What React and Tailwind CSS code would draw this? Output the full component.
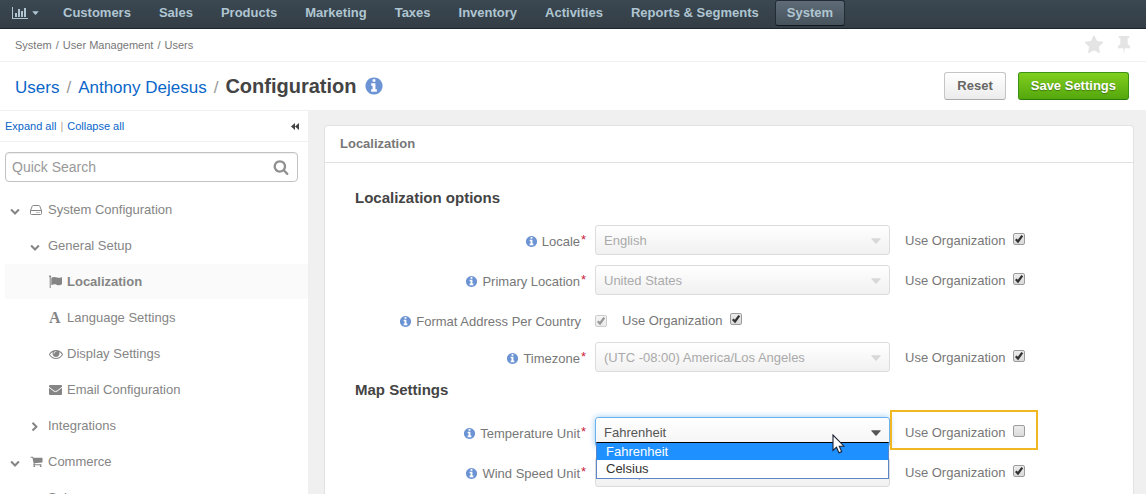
import React, { useId } from "react";

const ICONS = {
  info: [1792, "M1152 1376v-160q0-14-9-23t-23-9h-96v-512q0-14-9-23t-23-9h-320q-14 0-23 9t-9 23v160q0 14 9 23t23 9h96v320h-96q-14 0-23 9t-9 23v160q0 14 9 23t23 9h448q14 0 23-9t9-23zm-128-896v-160q0-14-9-23t-23-9h-192q-14 0-23 9t-9 23v160q0 14 9 23t23 9h192q14 0 23-9t9-23zm640 416q0 209-103 385.5t-279.5 279.5-385.5 103-385.5-103-279.5-279.5-103-385.5 103-385.5 279.5-279.5 385.5-103 385.5 103 279.5 279.5 103 385.5z"],
  search: [1792, "M1216 832q0-185-131.5-316.5t-316.5-131.5-316.5 131.5-131.5 316.5 131.5 316.5 316.5 131.5 316.5-131.5 131.5-316.5zm512 832q0 52-38 90t-90 38q-54 0-90-38l-343-342q-179 124-399 124-143 0-273.5-55.5t-225-150-150-225-55.5-273.5 55.5-273.5 150-225 225-150 273.5-55.5 273.5 55.5 225 150 150 225 55.5 273.5q0 220-124 399l343 343q37 37 37 90z"],
  chart: [2048, "M640 896v512h-256v-512h256zm384-512v1024h-256v-1024h256zm1024 1152v128h-2048v-1536h128v1408h1920zm-640-896v768h-256v-768h256zm384-384v1152h-256v-1152h256z"],
  down: [1792, "M1683 808l-742 741q-19 19-45 19t-45-19l-742-741q-19-19-19-45.5t19-45.5l166-165q19-19 45-19t45 19l531 531 531-531q19-19 45-19t45 19l166 165q19 19 19 45.5t-19 45.5z"],
  right: [1792, "M1363 877l-742 742q-19 19-45 19t-45-19l-166-166q-19-19-19-45t19-45l531-531-531-531q-19-19-19-45t19-45l166-166q19-19 45-19t45 19l742 742q19 19 19 45t-19 45z"],
  star: [1792, "M1728 647q0 22-26 48l-363 354 86 500q1 7 1 20 0 21-10.5 35.5t-30.5 14.5q-19 0-40-12l-449-236-449 236q-22 12-40 12-21 0-31.5-14.5t-10.5-35.5q0-6 2-20l86-500-364-354q-25-27-25-48 0-37 56-46l502-73 225-455q19-41 49-41t49 41l225 455 502 73q56 9 56 46z"],
  eye: [1792, "M1664 960q-152-236-381-353 61 104 61 225 0 185-131.5 316.5t-316.5 131.5-316.5-131.5-131.5-316.5q0-121 61-225-229 117-381 353 133 205 333.5 326.5t434.5 121.5 434.5-121.5 333.5-326.5zm-720-384q0-20-14-34t-34-14q-125 0-214.5 89.5t-89.5 214.5q0 20 14 34t34 14 34-14 14-34q0-86 61-147t147-61q20 0 34-14t14-34zm848 384q0 34-20 69-140 230-376.5 368.5t-499.5 138.5-499.5-139-376.5-368q-20-35-20-69t20-69q140-229 376.5-368t499.5-139 499.5 139 376.5 368q20 35 20 69z"],
  cart: [1792, "M704 1536q0 52-38 90t-90 38-90-38-38-90 38-90 90-38 90 38 38 90zm896 0q0 52-38 90t-90 38-90-38-38-90 38-90 90-38 90 38 38 90zm128-1088v512q0 24-16.5 42.5t-40.5 21.5l-1044 122q13 60 13 70 0 16-24 64h920q26 0 45 19t19 45-19 45-45 19h-1024q-26 0-45-19t-19-45q0-11 8-31.5t16-36 21.5-40 15.5-29.5l-177-823h-204q-26 0-45-19t-19-45 19-45 45-19h256q16 0 28.5 6.5t19.5 15.5 13 24.5 8 26 5.5 29.5 4.5 26h1201q26 0 45 19t19 45z"],
};

function Icon({ name, className }) {
  const [width, d] = ICONS[name];
  return (
    <svg viewBox={`0 0 ${width} 1792`} className={`shrink-0 ${className}`} fill="currentColor" aria-hidden="true">
      <path d={d} />
    </svg>
  );
}

function DriveIcon() {
  return (
    <svg viewBox="0 0 12 12" className="size-3 shrink-0" fill="none" stroke="currentColor" aria-hidden="true">
      <path d="M.5 6.5 2.2 2.2Q2.5 1.5 3.2 1.5h5.6q.7 0 1 .7l1.7 4.3v3q0 1-1 1h-9q-1 0-1-1zh11" />
      <path d="M6.5 8.5h1M8.5 8.5h1" />
    </svg>
  );
}

function FlagIcon() {
  return (
    <svg viewBox="0 0 14 14" className="size-3.5 shrink-0" fill="currentColor" aria-hidden="true">
      <path d="M0 1.500a1 1 0 1 1 1.700.7V13H.7V2.300A1 1 0 0 1 0 1.500zM2.300 2.800C4 1.700 6 1.600 8 2.400c1.700.8 3.300.5 5-.4V9.200c-2 1.200-3.700 1.300-5.500.5C6 9 4.300 9.200 2.300 10.200z" />
    </svg>
  );
}

function MailIcon() {
  return (
    <svg viewBox="0 0 14 14" className="size-3.5 shrink-0" aria-hidden="true">
      <rect x="0" y="2" width="13" height="10" rx="1" fill="currentColor" />
      <path d="M0 4.300 5 8.100q1.500 1 3 0L13 4.300" fill="none" stroke="#fff" />
    </svg>
  );
}

function PinIcon() {
  return (
    <svg viewBox="0 0 14 18" className="h-[18px] w-3.5 shrink-0" fill="currentColor" aria-hidden="true">
      <path d="M2.500 0h9q.8 0 .8.800v.8q0 .7-.8.7h-.8V8q2.600 1.200 2.600 4.200H7.800L7 18l-.8-5.800H.7Q.7 9.200 3.300 8V2.300h-.8q-.8 0-.8-.7V.8q0-.8.8-.8z" />
    </svg>
  );
}

function Caret({ className }) {
  return (
    <svg viewBox="0 0 10 6" className={className} fill="currentColor" aria-hidden="true">
      <path d="M.6.200h8.800q.6.100.2.700L5.600 5.500q-.6.500-1.200 0L.4.900Q0 .3.600.200z" />
    </svg>
  );
}

const NAV = ["Customers", "Sales", "Products", "Marketing", "Taxes", "Inventory", "Activities", "Reports & Segments"];

function TopNav() {
  return (
    <nav className="flex h-[29px] shrink-0 items-start border-b border-[#1c242d] bg-linear-to-b from-[#3b4851] to-[#333d46] text-[13px] font-bold text-[#afc6d2]">
      <button type="button" aria-label="Dashboards" className="flex h-[25px] w-[46px] items-center gap-1 pl-3">
        <Icon name="chart" className="h-3.5 w-4" />
        <Caret className="h-1 w-[7px]" />
      </button>
      <ul className="flex h-[26px] gap-1 pl-[5px] whitespace-nowrap">
        {NAV.map((item) => (
          <li key={item} className="flex">
            <a href="#" className="px-3 leading-[26px]">{item}</a>
          </li>
        ))}
        <li className="flex">
          <a href="#" className="rounded-[3px] border border-[#232c35] border-b-[#10161c] bg-linear-to-b from-[#5f6b76] to-[#46525c] px-[11px] leading-6">
            System
          </a>
        </li>
      </ul>
    </nav>
  );
}

function Breadcrumbs() {
  return (
    <div className="flex h-[33px] shrink-0 items-center justify-between border-b border-[#f0f0f0] pr-[15px] pl-[15px]">
      <p className="text-[11px] text-[#777]">
        System <span className="mx-px">/</span> User Management <span className="mx-px">/</span> Users
      </p>
      <div className="flex items-center gap-[13px] text-[#e4e4e4]">
        <button type="button" aria-label="Add to favorites"><Icon name="star" className="size-5" /></button>
        <button type="button" aria-label="Pin page"><PinIcon /></button>
      </div>
    </div>
  );
}

function TitleBar() {
  return (
    <header className="flex h-12 shrink-0 items-center justify-between pr-[17px] pl-[15px]">
      <h1 className="flex items-baseline gap-[7px] text-[17px] text-[#999]">
        <a href="#" className="text-[#0a66c9]">Users</a>
        <span>/</span>
        <a href="#" className="text-[#0a66c9]">Anthony Dejesus</a>
        <span>/</span>
        <span className="text-xl font-bold text-[#444]">Configuration</span>
        <Icon name="info" className="size-5 self-center text-[#6c93d3]" />
      </h1>
      <div className="flex gap-3 text-[13px] font-bold">
        <button type="button" className="h-7 rounded-[3px] border border-[#c5c5c5] border-b-[#aaa] bg-linear-to-b from-white to-[#ececec] px-3 text-[#666]">
          Reset
        </button>
        <button type="button" className="h-7 rounded-[3px] border border-[#3c9313] border-b-[#2e7a0b] bg-linear-to-b from-[#80cf1f] to-[#54a70c] px-3 text-white text-shadow-[0_1px_1px_rgb(0_0_0/0.35)]">
          Save Settings
        </button>
      </div>
    </header>
  );
}

const TREE = [
  { label: "System Configuration", depth: 0, arrow: "down", icon: <DriveIcon /> },
  { label: "General Setup", depth: 1, arrow: "down" },
  { label: "Localization", depth: 2, icon: <FlagIcon />, active: true },
  { label: "Language Settings", depth: 2, icon: <span aria-hidden="true" className="w-3.5 font-['Liberation_Serif',serif] text-base font-bold">A</span> },
  { label: "Display Settings", depth: 2, icon: <Icon name="eye" className="size-3.5" /> },
  { label: "Email Configuration", depth: 2, icon: <MailIcon /> },
  { label: "Integrations", depth: 1, arrow: "right" },
  { label: "Commerce", depth: 0, arrow: "down", icon: <Icon name="cart" className="size-[13px]" /> },
  { label: "Sales", depth: 1, arrow: "right" },
];

const INDENT = ["pl-[5px]", "pl-[25px]", "pl-[43px]"];

function TreeRow({ label, depth, arrow, icon, active }) {
  return (
    <li>
      <a href="#" className={`flex h-[35px] items-center ${INDENT[depth]} ${active ? "bg-[#fafafa] font-bold" : ""}`}>
        {arrow && (
          <span className="flex w-[18px] pt-[2px]">
            <Icon name={arrow} className="size-[10px]" />
          </span>
        )}
        {icon && <span className={`flex w-[18px] items-center ${depth === 0 ? "ml-[2px]" : "ml-px"}`}>{icon}</span>}
        {label}
      </a>
    </li>
  );
}

function Sidebar() {
  return (
    <aside className="w-[308px] shrink-0 border-t border-[#f0f0f0] bg-white">
      <div className="flex h-[31px] items-center justify-between border-b border-[#f0f0f0] pr-[9px] pl-[5px] text-[11px]">
        <p className="text-[#777]">
          <a href="#" className="text-[#0a66c9]">Expand all</a>
          <span className="mx-1 text-[#b5a48c]">|</span>
          <a href="#" className="text-[#0a66c9]">Collapse all</a>
        </p>
        <button type="button" aria-label="Collapse sidebar" className="text-[#444]">
          <svg viewBox="0 0 8 7" className="h-[7px] w-2" fill="currentColor" aria-hidden="true">
            <path d="M4 0v7L0 3.500zM8 0v7L4 3.500z" />
          </svg>
        </button>
      </div>
      <div className="pt-[10px] pr-[10px] pl-[5px]">
        <form className="flex h-[30px] items-center rounded-[4px] border border-[#c2c2c2] pr-[8px] pl-[6px] shadow-[inset_0_1px_1px_rgb(0_0_0/0.07)]">
          <input type="text" aria-label="Quick Search" placeholder="Quick Search" className="min-w-0 flex-1 bg-transparent text-sm text-[#555] outline-none placeholder:text-[#999]" />
          <button type="submit" aria-label="Search" className="text-[#8f8f8f]">
            <Icon name="search" className="size-4" />
          </button>
        </form>
      </div>
      <ul className="flex flex-col gap-px pt-[10px] pl-[5px] text-[13px] text-[#858585]">
        {TREE.map((row) => <TreeRow key={row.label} {...row} />)}
      </ul>
    </aside>
  );
}

function Checkbox({ id, label, checked, disabled }) {
  return (
    <span className={`relative flex size-3 ${disabled ? "opacity-50" : ""}`}>
      <input
        id={id}
        type="checkbox"
        aria-label={label}
        defaultChecked={checked}
        disabled={disabled}
        className="peer size-3 appearance-none rounded-[2px] border border-[#9c9c9c] bg-linear-to-b from-[#ececec] to-[#dadada]"
      />
      <svg viewBox="0 0 12 12" className="pointer-events-none absolute inset-0 hidden size-3 peer-checked:block" fill="none" stroke="#333" strokeWidth="2.300" aria-hidden="true">
        <path d="M2.800 6.300 5 8.500 9.300 2.600" />
      </svg>
    </span>
  );
}

function UseOrganization({ checked = true, highlighted }) {
  const id = useId();
  return (
    <div className="relative flex h-[30px] items-center gap-2 px-[15px] pt-[2px]">
      {highlighted && <span className="pointer-events-none absolute -top-[7px] right-[2px] left-0 h-10 border-2 border-[#f2b824]" />}
      <label htmlFor={id}>Use Organization</label>
      <span className="pb-1"><Checkbox id={id} checked={checked} /></span>
    </div>
  );
}

function FieldLabel({ htmlFor, required = true, children }) {
  return (
    <div className="flex w-60 shrink-0 items-center justify-end pt-[3px]">
      <Icon name="info" className="mr-[4px] size-[13px] text-[#6c93d3]" />
      <label htmlFor={htmlFor}>{children}</label>
      {required ? <span className="w-[15px] pb-1 pl-px text-[#c81f3c]">*</span> : <span className="w-3.5" />}
    </div>
  );
}

function OptionList() {
  return (
    <ul role="listbox" aria-label="Temperature Unit options" className="absolute top-[25px] right-px left-px z-10 border border-[#5c86c8] border-t-black bg-white text-[13px] leading-[17px] text-[#333]">
      <li role="option" aria-selected="true" className="bg-[#1e90ff] px-[9px] text-white">Fahrenheit</li>
      <li role="option" aria-selected="false" className="px-[9px] pb-px">Celsius</li>
    </ul>
  );
}

function Pointer() {
  return (
    <svg viewBox="0 0 13 20" className="pointer-events-none absolute top-[17px] right-[45px] z-20 h-5 w-[13px]" aria-hidden="true">
      <path d="M1 1v15.500l3.500-3.300 2.400 5.600 2.800-1.200-2.400-5.400H12z" fill="#fff" stroke="#1c2233" strokeWidth="1.100" />
    </svg>
  );
}

function SelectField({ label, value, options = [value], open, useOrg = true }) {
  const id = useId();
  return (
    <div className="mb-[10px] flex h-[30px]">
      <FieldLabel htmlFor={id}>{label}</FieldLabel>
      <div className="relative w-[295px] shrink-0">
        <select
          id={id}
          disabled={!open}
          defaultValue={value}
          className={`h-[30px] w-full appearance-none rounded-[3px] border bg-linear-to-b px-2 pt-[2px] opacity-100 outline-none ${
            open
              ? "border-[#6bb2ec] from-white to-[#f4f4f4] text-[#555] shadow-[0_0_6px_rgb(82_168_236/0.6)]"
              : "border-[#dcdcdc] from-white to-[#f1f1f1] text-[#aaa]"
          }`}
        >
          {options.map((option) => <option key={option}>{option}</option>)}
        </select>
        <Caret className={`pointer-events-none absolute top-[13px] right-[9px] h-[6px] w-[10px] ${open ? "text-[#555]" : "text-[#d8d8d8]"}`} />
        {open && <OptionList />}
        {open && <Pointer />}
      </div>
      <UseOrganization checked={useOrg} highlighted={open} />
    </div>
  );
}

function Settings() {
  const addressId = useId();
  return (
    <section className="rounded-t-[4px] border border-b-0 border-[#e2e2e2] bg-white">
      <h2 className="h-[37px] border-b border-[#e2e2e2] px-[15px] text-[13px] leading-9 font-bold text-[#777]">Localization</h2>
      <div className="px-[30px] pt-[25px] pb-8 text-[13px] text-[#777]">
        <h3 className="mb-[17px] text-[15px] leading-5 font-bold text-[#444]">Localization options</h3>
        <SelectField label="Locale" value="English" />
        <SelectField label="Primary Location" value="United States" />
        <div className="mb-[7px] flex h-[30px]">
          <FieldLabel htmlFor={addressId} required={false}>Format Address Per Country</FieldLabel>
          <span className="flex items-center pt-[2px]"><Checkbox id={addressId} checked disabled /></span>
          <UseOrganization />
        </div>
        <SelectField label="Timezone" value="(UTC -08:00) America/Los Angeles" />
        <h3 className="mt-[-2px] mb-[17px] text-[15px] leading-5 font-bold text-[#444]">Map Settings</h3>
        <SelectField label="Temperature Unit" value="Fahrenheit" options={["Fahrenheit", "Celsius"]} open useOrg={false} />
        <SelectField label="Wind Speed Unit" value="miles per hour" />
      </div>
    </section>
  );
}

export default function App() {
  return (
    <div className="flex h-screen flex-col overflow-hidden bg-white font-['Liberation_Sans',Arial,sans-serif]">
      <TopNav />
      <Breadcrumbs />
      <TitleBar />
      <div className="flex min-h-0 flex-1 overflow-hidden bg-[#f0f0f0]">
        <Sidebar />
        <main className="min-w-0 flex-1 px-4 pt-[15px] pr-3">
          <Settings />
        </main>
      </div>
    </div>
  );
}
